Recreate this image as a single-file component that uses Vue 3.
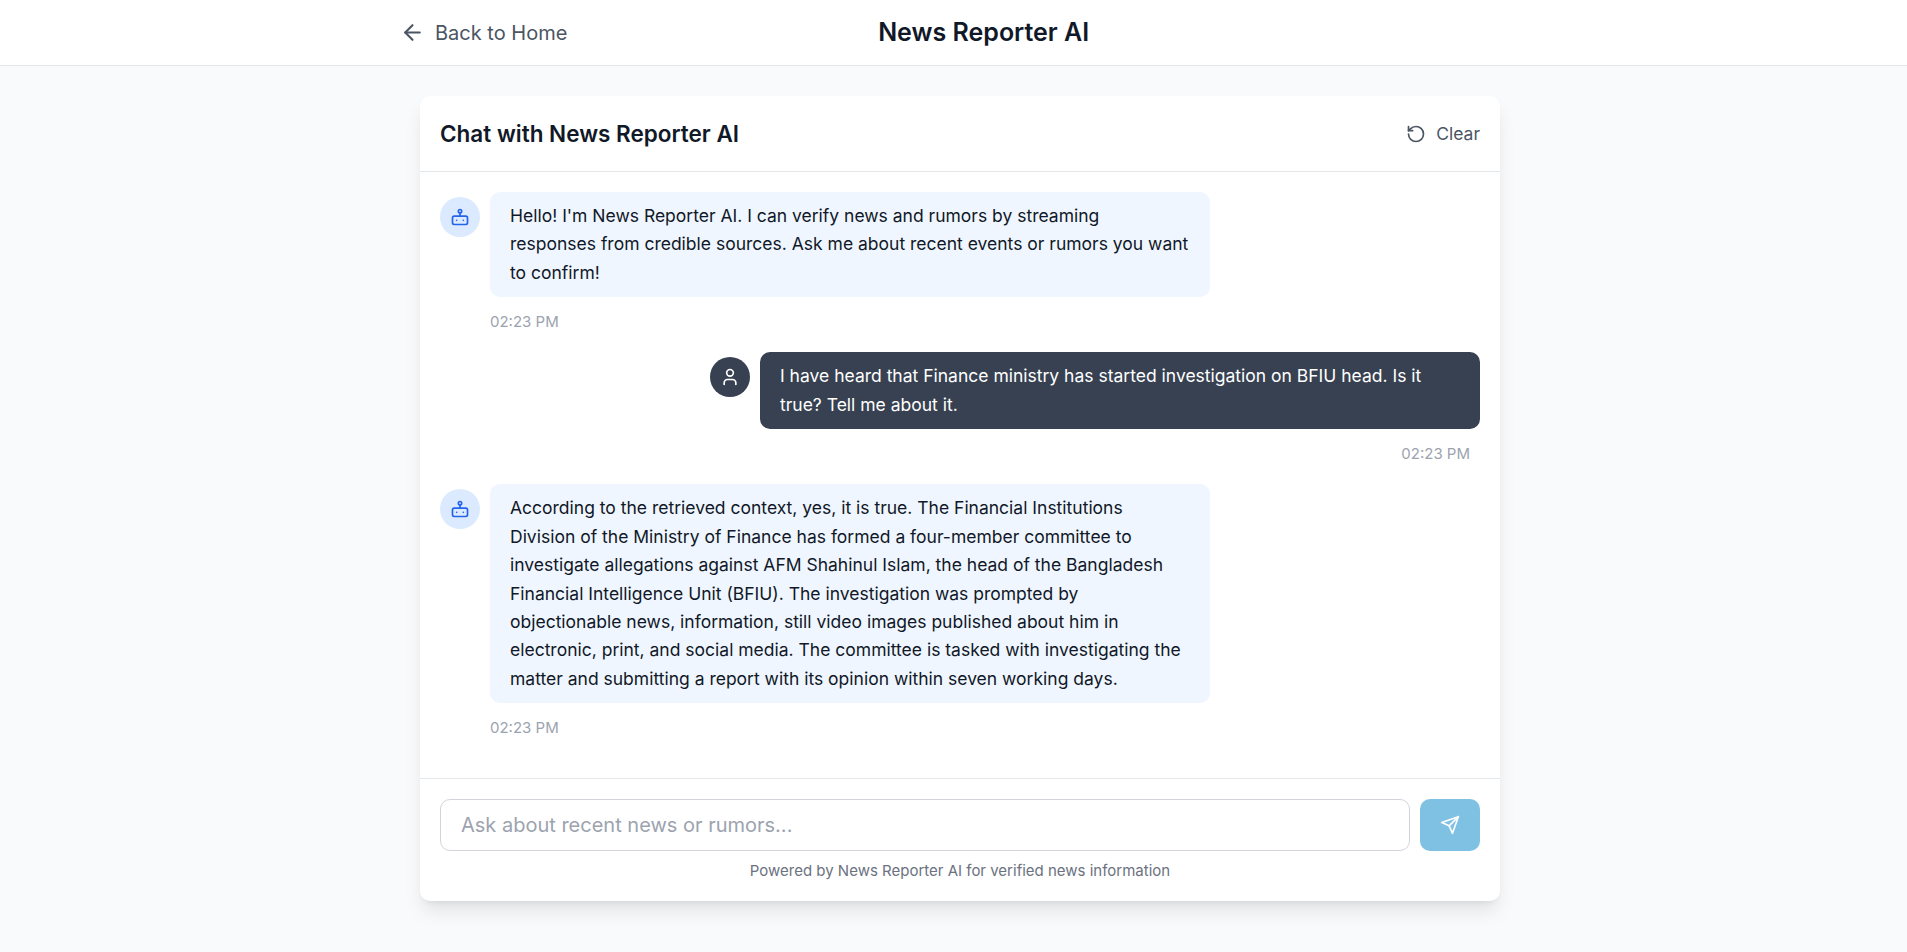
<script setup>
const messages = [
  {
    from: 'bot',
    time: '02:23 PM',
    text: "Hello! I'm News Reporter AI. I can verify news and rumors by streaming responses from credible sources. Ask me about recent events or rumors you want to confirm!",
  },
  {
    from: 'user',
    time: '02:23 PM',
    text: 'I have heard that Finance ministry has started investigation on BFIU head. Is it true? Tell me about it.',
  },
  {
    from: 'bot',
    time: '02:23 PM',
    text: 'According to the retrieved context, yes, it is true. The Financial Institutions Division of the Ministry of Finance has formed a four-member committee to investigate allegations against AFM Shahinul Islam, the head of the Bangladesh Financial Intelligence Unit (BFIU). The investigation was prompted by objectionable news, information, still video images published about him in electronic, print, and social media. The committee is tasked with investigating the matter and submitting a report with its opinion within seven working days.',
  },
]
</script>

<template>
  <div class="page">
    <header class="topbar">
      <div class="topbar-inner">
        <a class="back">
          <svg class="icon icon-lg" viewBox="0 0 24 24"><path d="m12 19-7-7 7-7" /><path d="M19 12H5" /></svg>
          <span>Back to Home</span>
        </a>
        <h1 class="title">News Reporter AI</h1>
        <div class="spacer"></div>
      </div>
    </header>

    <main class="content">
      <section class="card">
        <div class="card-head">
          <h2 class="card-title">Chat with News Reporter AI</h2>
          <button class="clear" type="button">
            <svg class="icon" viewBox="0 0 24 24"><path d="M3 12a9 9 0 1 0 9-9 9.75 9.75 0 0 0-6.74 2.74L3 8" /><path d="M3 3v5h5" /></svg>
            <span>Clear</span>
          </button>
        </div>

        <div class="messages">
          <div v-for="(m, i) in messages" :key="i" class="message" :class="m.from">
            <div class="avatar">
              <svg v-if="m.from === 'bot'" class="icon" viewBox="0 0 24 24">
                <rect x="3" y="11" width="18" height="10" rx="2" />
                <circle cx="12" cy="5" r="2" />
                <path d="M12 7v4" />
                <path d="M8 16h.01" />
                <path d="M16 16h.01" />
              </svg>
              <svg v-else class="icon" viewBox="0 0 24 24">
                <path d="M19 21v-2a4 4 0 0 0-4-4H9a4 4 0 0 0-4 4v2" />
                <circle cx="12" cy="7" r="4" />
              </svg>
            </div>
            <div class="body">
              <p class="bubble">{{ m.text }}</p>
              <span class="time">{{ m.time }}</span>
            </div>
          </div>
        </div>

        <div class="composer">
          <div class="composer-row">
            <input class="field" type="text" placeholder="Ask about recent news or rumors..." />
            <button class="send" type="button">
              <svg class="icon" viewBox="0 0 24 24"><path d="m22 2-7 20-4-9-9-4Z" /><path d="M22 2 11 13" /></svg>
            </button>
          </div>
          <p class="hint">Powered by News Reporter AI for verified news information</p>
        </div>
      </section>
    </main>
  </div>
</template>

<style>
body {
  background: #f9fafb;
  overflow: hidden;
}
</style>

<style scoped>
.page,
.page * {
  box-sizing: border-box;
}
.page {
  width: 1920px;
  height: 952px;
  overflow: hidden;
  background: #f9fafb;
  color: #111827;
  font-family: Inter, "Liberation Sans", sans-serif;
  font-size: 20px;
  line-height: 30px;
}
h1,
h2,
p {
  margin: 0;
}
button {
  border: 0;
  padding: 0;
  font: inherit;
  background: none;
}
.icon {
  width: 20px;
  height: 20px;
  display: block;
  flex: none;
  fill: none;
  stroke: currentColor;
  stroke-width: 2;
  stroke-linecap: round;
  stroke-linejoin: round;
}
.icon-lg {
  width: 25px;
  height: 25px;
}
.topbar {
  background: #fff;
  border-bottom: 1px solid #e5e7eb;
}
.topbar-inner {
  width: 1120px;
  margin: 0 auto;
  padding: 15px 0;
  display: flex;
  align-items: center;
  justify-content: space-between;
}
.back {
  display: flex;
  align-items: center;
  gap: 10px;
  color: #4b5563;
}
.title {
  font-size: 25px;
  line-height: 35px;
  font-weight: 600;
}
.spacer {
  width: 120px;
}
.content {
  width: 1080px;
  margin: 0 auto;
  padding-top: 30px;
}
.card {
  height: 805px;
  display: flex;
  flex-direction: column;
  background: #fff;
  border-radius: 10px;
  box-shadow: 0 12.5px 18.75px -3.75px rgba(0, 0, 0, 0.1), 0 5px 7.5px -5px rgba(0, 0, 0, 0.1);
}
.card-head {
  display: flex;
  align-items: center;
  justify-content: space-between;
  padding: 20px;
  border-bottom: 1px solid #e5e7eb;
}
.card-title {
  font-size: 22.5px;
  line-height: 35px;
  font-weight: 600;
}
.clear {
  display: flex;
  align-items: center;
  gap: 10px;
  font-size: 17.5px;
  line-height: 25px;
  color: #4b5563;
}
.messages {
  flex: 1;
  min-height: 0;
  padding: 20px;
  display: flex;
  flex-direction: column;
  gap: 20px;
}
.message {
  display: flex;
  gap: 10px;
}
.message.user {
  justify-content: flex-end;
}
.avatar {
  width: 40px;
  height: 40px;
  margin-top: 5px;
  flex: none;
  display: flex;
  align-items: center;
  justify-content: center;
  border-radius: 50%;
  background: #dbeafe;
  color: #2563eb;
}
.user .avatar {
  background: #374151;
  color: #fff;
}
.body {
  width: 720px;
  display: flex;
  flex-direction: column;
  gap: 15px;
}
.bubble {
  padding: 10px 20px;
  border-radius: 10px;
  background: #eff6ff;
  font-size: 17.5px;
  line-height: 1.625;
}
.user .bubble {
  background: #374151;
  color: #fff;
}
.time {
  font-size: 15px;
  line-height: 20px;
  color: #9ca3af;
}
.user .time {
  text-align: right;
  padding-right: 10px;
}
.composer {
  border-top: 1px solid #e5e7eb;
  padding: 20px;
}
.composer-row {
  display: flex;
  gap: 10px;
}
.field {
  flex: 1;
  min-width: 0;
  height: 52px;
  padding: 10px 20px;
  border: 1px solid #d1d5db;
  border-radius: 10px;
  background: #fff;
  font: inherit;
  color: #111827;
  outline: none;
}
.field::placeholder {
  color: #9ca3af;
  opacity: 1;
}
.send {
  width: 60px;
  display: flex;
  align-items: center;
  justify-content: center;
  border-radius: 10px;
  background: #0284c7;
  color: #fff;
  opacity: 0.5;
}
.hint {
  margin-top: 10px;
  text-align: center;
  font-size: 15px;
  line-height: 20px;
  color: #6b7280;
}
</style>
